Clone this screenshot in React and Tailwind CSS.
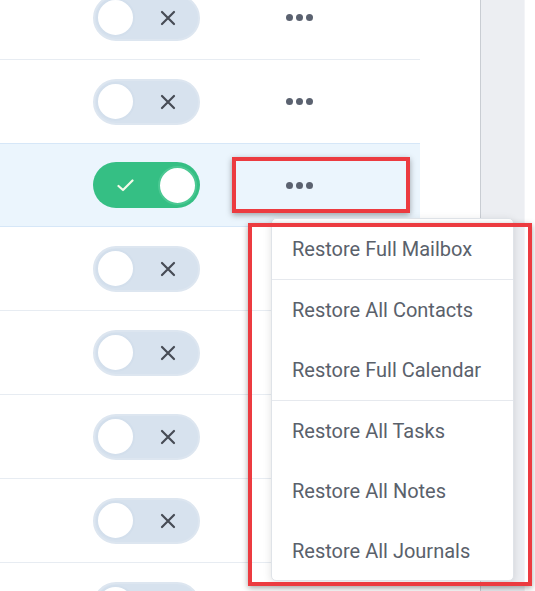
import React from 'react';

const MENU = [
  ['Restore Full Mailbox'],
  ['Restore All Contacts', 'Restore Full Calendar'],
  ['Restore All Tasks', 'Restore All Notes', 'Restore All Journals'],
];

const ROWS = [false, false, true, false, false, false, false, false];

function Toggle({ on }) {
  if (on) {
    return (
      <div className="w-[107px] h-[46px] rounded-full bg-[#35bf84] flex items-center justify-between pl-[24px] pr-[3px] shrink-0">
        <svg width="17" height="13" viewBox="0 0 17 13" fill="none">
          <path d="M1.5 7 L6 11 L15.5 1.5" stroke="#f4fbe9" strokeWidth="2.2" strokeLinecap="round" strokeLinejoin="round" />
        </svg>
        <div className="w-[39px] h-[39px] rounded-full bg-white border-2 border-[#4cc893]" />
      </div>
    );
  }
  return (
    <div className="w-[107px] h-[46px] rounded-full bg-[#d7e2ee] border-2 border-[#dde6f0] flex items-center pl-[1px] shrink-0">
      <div className="w-[39px] h-[39px] rounded-full bg-white border-2 border-[#d3dfec]" />
      <svg className="ml-[25px]" width="16" height="16" viewBox="0 0 16 16" fill="none">
        <path d="M2 2 L14 14 M14 2 L2 14" stroke="#474c55" strokeWidth="2.2" strokeLinecap="round" />
      </svg>
    </div>
  );
}

function Dots() {
  return (
    <div className="ml-[86px] flex items-center gap-[3px]">
      <span className="w-[7px] h-[7px] rounded-full bg-[#5b6270]" />
      <span className="w-[7px] h-[7px] rounded-full bg-[#5b6270]" />
      <span className="w-[7px] h-[7px] rounded-full bg-[#5b6270]" />
    </div>
  );
}

export default function App() {
  return (
    <div className="relative w-[535px] h-[591px] overflow-hidden bg-white flex" style={{ fontFamily: 'Roboto, "Noto Sans", sans-serif' }}>
      <div className="w-[420px] shrink-0 flex flex-col mt-[-24px]">
        {ROWS.map((on, i) => (
          <div
            key={i}
            className={
              on
                ? 'h-[84px] shrink-0 flex items-center pl-[93px] bg-[#ebf5fd] border-y border-[#d6e7f8] -mt-px'
                : 'h-[84px] shrink-0 flex items-center pl-[93px] border-b border-[#e7ecf2]'
            }
          >
            <Toggle on={on} />
            <Dots />
          </div>
        ))}
      </div>
      <div className="w-[61px] shrink-0 border-r border-[#c9cdd3]" />
      <div className="flex-1 bg-[#eceef2] border-r border-[#f3f4f7] mr-[10px]" />

      {/* annotation around the dots */}
      <div className="absolute left-[232px] top-[157px] w-[178px] h-[56px] border-[4px] border-[#ec3b40] shadow-[0_2px_6px_rgba(0,0,0,0.35)]" />

      {/* dropdown */}
      <div className="absolute left-[271px] top-[218px] w-[243px] h-[363px] bg-white border border-[#dfe3e8] rounded-[5px] shadow-[0_2px_8px_rgba(0,0,0,0.12)] flex flex-col">
        {MENU.map((group, gi) => (
          <div key={gi} className={gi < MENU.length - 1 ? 'border-b border-[#e6e9ee]' : ''}>
            {group.map((label) => (
              <div key={label} className="h-[60px] flex items-center pl-[20px] text-[20px] text-[#5a616b]">
                {label}
              </div>
            ))}
          </div>
        ))}
      </div>

      {/* annotation around the menu */}
      <div className="absolute left-[248px] top-[223px] w-[284px] h-[363px] border-[4px] border-[#ec3b40] shadow-[0_2px_6px_rgba(0,0,0,0.35)]" />
    </div>
  );
}
